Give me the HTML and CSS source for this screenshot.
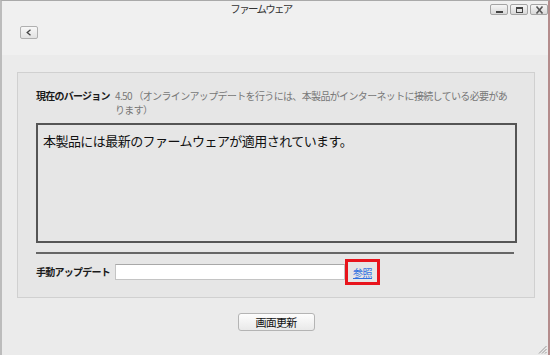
FILE: index.html
```html
<!DOCTYPE html>
<html lang="ja">
<head>
<meta charset="UTF-8">
<title>ファームウェア</title>
<link rel="stylesheet" href="styles.css">
</head>
<body>
<div class="window">
  <div class="titlebar">
    <span></span>
    <div class="title">ファームウェア</div>
    <div class="win-buttons">
      <button class="win-btn">
        <svg width="9" height="6" viewBox="0 0 9 6"><rect x="1" y="4" width="7" height="2" fill="#444"/></svg>
      </button>
      <button class="win-btn">
        <svg width="9" height="8" viewBox="0 0 9 8"><rect x="1.5" y="1.5" width="6" height="5" fill="none" stroke="#444"/><rect x="1" y="1" width="7" height="2" fill="#444"/></svg>
      </button>
      <button class="win-btn">
        <svg width="9" height="8" viewBox="0 0 9 8"><path d="M1.5 0.5 L7.5 7.5 M7.5 0.5 L1.5 7.5" stroke="#555" stroke-width="1.6"/></svg>
      </button>
    </div>
  </div>

  <div class="toolbar">
    <button class="back-btn">
      <svg width="6" height="7" viewBox="0 0 6 7"><path d="M4.5 0.8 L1.2 3.5 L4.5 6.2" fill="none" stroke="#444" stroke-width="1.3"/></svg>
    </button>
  </div>

  <div class="main">
    <div class="panel">
      <div class="row version-row">
        <div class="label">現在のバージョン</div>
        <div class="value">4.50 （オンラインアップデートを行うには、本製品がインターネットに接続している必要があります）</div>
      </div>

      <div class="status-box">本製品には最新のファームウェアが適用されています。</div>

      <div class="separator"></div>

      <div class="row manual-row">
        <div class="label">手動アップデート</div>
        <input class="file-input" type="text">
        <div class="browse-box">
          <a href="#" class="browse-link">参照</a>
        </div>
      </div>
    </div>

    <div class="refresh-wrap">
      <button class="refresh-btn">画面更新</button>
    </div>

    <div class="grip">
      <svg width="9" height="9" viewBox="0 0 9 9"><path d="M8.5 1 L1 8.5 M8.5 4 L4 8.5 M8.5 7 L7 8.5" stroke="#999" stroke-width="1"/></svg>
    </div>
  </div>
</div>
</body>
</html>
```

FILE: styles.css
```css
body {
  margin: 0;
  background-color: #f0f0f0;
  font-family: "Noto Sans CJK JP", "Noto Sans", sans-serif;
  color: #222;
}

.window {
  box-sizing: border-box;
  width: 550px;
  height: 355px;
  border-top: 1px solid #a9a9a9;
  border-left: 2px solid #bcbcbc;
  border-right: 2px solid #b48c8c;
  background-color: #f0f0f0;
  display: flex;
  flex-direction: column;
}

/* title bar */
.titlebar {
  height: 18px;
  display: grid;
  grid-template-columns: 1fr auto 1fr;
  align-items: start;
}

.title {
  font-size: 10.5px;
  line-height: 14px;
  letter-spacing: -1.7px;
  color: #333;
  padding-top: 1px;
  margin-right: 28px;
}

.win-buttons {
  justify-self: end;
  display: flex;
  gap: 2px;
  padding-top: 3px;
  padding-right: 0;
}

.win-btn {
  width: 18px;
  height: 11px;
  padding: 0;
  border: 1px solid #a4a4a4;
  border-radius: 2px;
  background: linear-gradient(#f6f6f6, #d8d8d8);
  display: flex;
  align-items: center;
  justify-content: center;
}

/* back button row */
.toolbar {
  height: 36px;
  padding-left: 18px;
}

.back-btn {
  margin-top: 7px;
  width: 18px;
  height: 13px;
  padding: 0;
  border: 1px solid #b0b0b0;
  border-radius: 2px;
  background: linear-gradient(#f8f8f8, #e2e2e2);
  display: flex;
  align-items: center;
  justify-content: center;
}

/* main area */
.main {
  flex: 1;
  background-color: #ebebeb;
  padding: 17px 13px 0 15px;
  position: relative;
}

.panel {
  height: 226px;
  box-sizing: border-box;
  border: 1px solid #d0d0d0;
  background-color: #e6e6e6;
  padding: 16px 17px 0 18px;
}

.row {
  display: flex;
}

.label {
  width: 79px;
  flex-shrink: 0;
  font-size: 10px;
  font-weight: bold;
  letter-spacing: -0.75px;
  color: #1a1a1a;
}

.version-row .label,
.version-row .value {
  line-height: 14px;
}

.value {
  width: 396px;
  font-size: 10px;
  letter-spacing: -0.65px;
  color: #777;
}

.status-box {
  margin-top: 6px;
  width: 481px;
  height: 120px;
  box-sizing: border-box;
  border: 2px solid #555;
  padding: 7px 5px;
  font-size: 13px;
  line-height: 18px;
  letter-spacing: -0.55px;
  color: #111;
}

.separator {
  margin-top: 9px;
  width: 478px;
  height: 2px;
  background-color: #666;
}

.manual-row {
  margin-top: 5px;
  align-items: center;
}

.manual-row .label {
  line-height: 14px;
}

.file-input {
  width: 230px;
  height: 16px;
  box-sizing: border-box;
  margin: 0;
  border: 1px solid #c4c4c4;
  border-top-color: #a8a8a8;
  background-color: #fff;
  padding: 0 2px;
}

.browse-box {
  width: 35px;
  height: 26px;
  box-sizing: border-box;
  border: 3px solid #e8141c;
  display: flex;
  align-items: center;
  padding-left: 5px;
}

.browse-link {
  font-size: 10px;
  letter-spacing: -0.5px;
  color: #2f6fe0;
  text-decoration: underline;
}

.refresh-wrap {
  display: flex;
  justify-content: center;
  padding-top: 15px;
}

.refresh-btn {
  width: 77px;
  height: 18px;
  padding: 0;
  border: 1px solid #b4b4b4;
  border-radius: 3px;
  background: linear-gradient(#fdfdfd, #e9e9e9);
  font-family: "Noto Sans CJK JP", sans-serif;
  font-size: 11px;
  letter-spacing: -0.8px;
  color: #111;
}

.grip {
  position: absolute;
  right: 1px;
  bottom: 1px;
  line-height: 0;
}
```
